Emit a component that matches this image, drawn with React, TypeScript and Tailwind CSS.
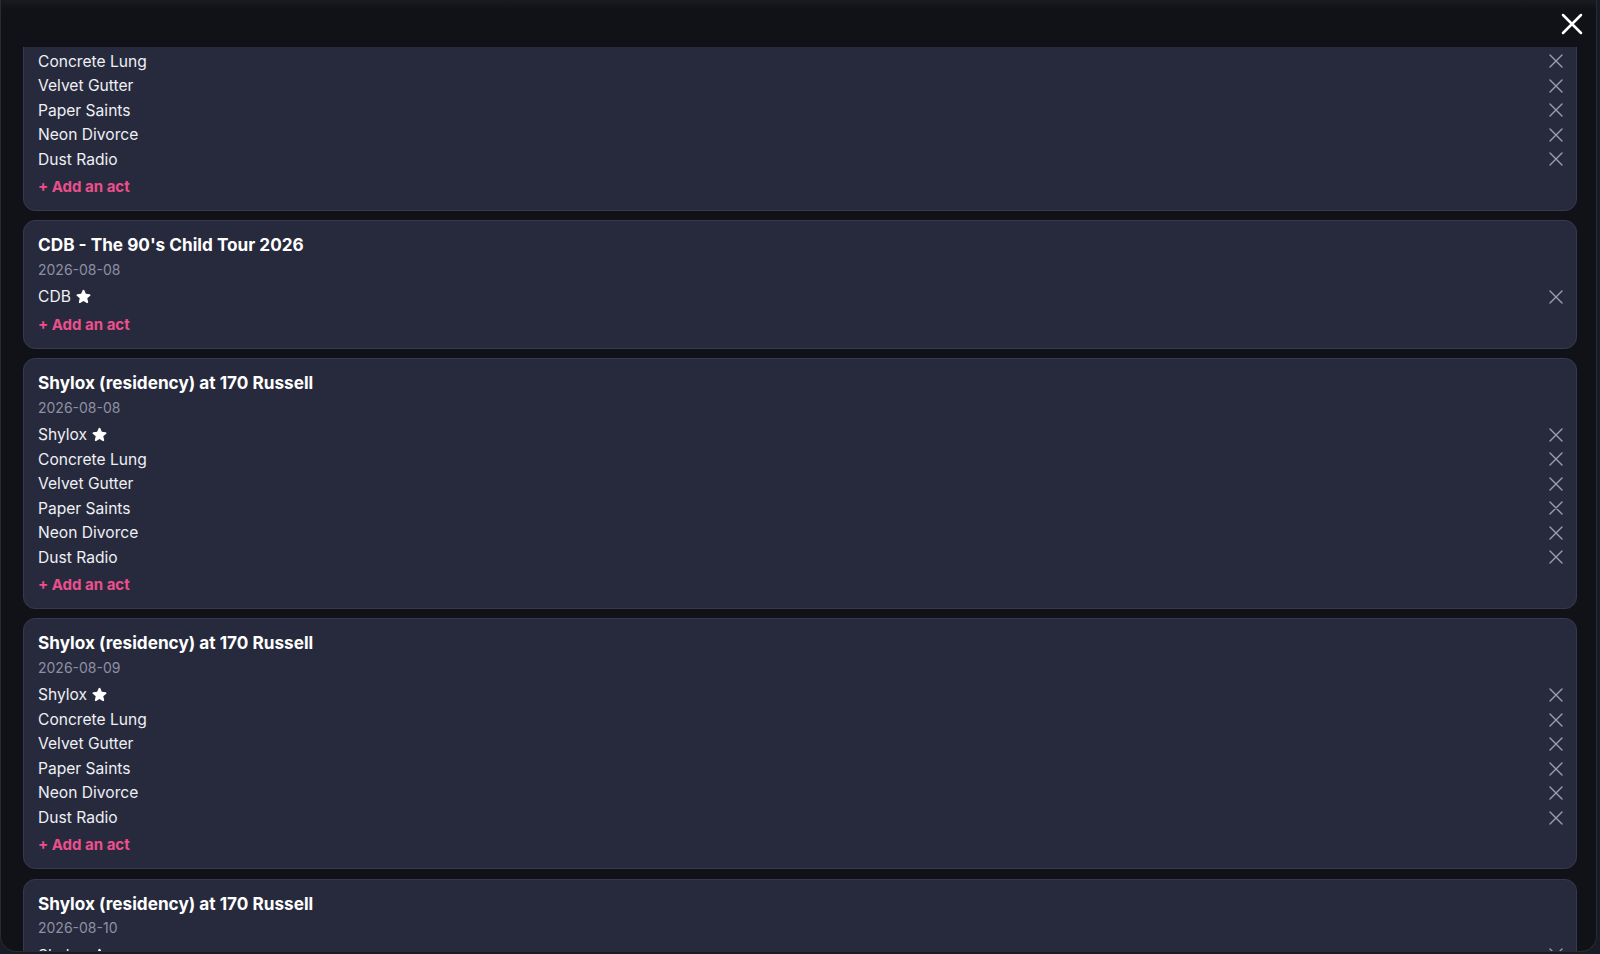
import React from "react";

type Show = { title: string; date: string; acts: string[] };

const SIX = ["Concrete Lung", "Velvet Gutter", "Paper Saints", "Neon Divorce", "Dust Radio"];

const shows: Show[] = [
  { title: "Shylox (residency) at 170 Russell", date: "2026-08-07", acts: ["Shylox", ...SIX] },
  { title: "CDB - The 90's Child Tour 2026", date: "2026-08-08", acts: ["CDB"] },
  { title: "Shylox (residency) at 170 Russell", date: "2026-08-08", acts: ["Shylox", ...SIX] },
  { title: "Shylox (residency) at 170 Russell", date: "2026-08-09", acts: ["Shylox", ...SIX] },
  { title: "Shylox (residency) at 170 Russell", date: "2026-08-10", acts: ["Shylox", ...SIX] },
  { title: "Shylox (residency) at 170 Russell", date: "2026-08-11", acts: ["Shylox", ...SIX] },
];

function XIcon({ className, sw }: { className: string; sw: number }) {
  return (
    <svg viewBox="0 0 24 24" fill="none" stroke="currentColor" strokeWidth={sw} strokeLinecap="round" strokeLinejoin="round" className={className}>
      <path d="M6 18 18 6M6 6l12 12" />
    </svg>
  );
}

function Star() {
  return (
    <svg viewBox="0 0 24 24" fill="currentColor" className="w-[17px] h-[17px] text-white">
      <path d="M10.788 3.21c.448-1.077 1.976-1.077 2.424 0l2.082 5.006 5.404.434c1.164.093 1.636 1.545.749 2.305l-4.117 3.527 1.257 5.273c.271 1.136-.964 2.033-1.96 1.425L12 18.354 7.373 21.18c-.996.608-2.231-.29-1.96-1.425l1.257-5.273-4.117-3.527c-.887-.76-.415-2.212.749-2.305l5.404-.434 2.082-5.005Z" />
    </svg>
  );
}

function Card({ show }: { show: Show }) {
  return (
    <div className="shrink-0 rounded-[12px] border border-[#363a50] bg-[#272a3c] pl-[14px] pr-[8px] pt-[13px] pb-[13px]">
      <div className="h-[21px] leading-[21px] text-[17.2px] font-bold text-white">{show.title}</div>
      <div className="mt-[3.5px] h-[21px] leading-[21px] text-[14px] text-[#8d90a4]">{show.date}</div>
      <div className="mt-[5px] flex flex-col">
        {show.acts.map((a, i) => (
          <div key={i} className="flex h-[24.5px] items-center justify-between">
            <div className="flex items-center gap-[4px] text-[15.6px] text-[#eef0f5]">
              <span>{a}</span>
              {i === 0 && <Star />}
            </div>
            <XIcon className="w-[24px] h-[24px] text-[#9c9fb2]" sw={1.4} />
          </div>
        ))}
      </div>
      <div className="mt-[5.25px] h-[20px] leading-[20px] text-[15px] font-bold text-[#ec4f8c]">+ Add an act</div>
    </div>
  );
}

export default function App() {
  return (
    <div className="h-[954px] w-full bg-[#181c27] pr-[3px] pb-[2px]" style={{ fontFamily: "Inter, 'Noto Sans', sans-serif" }}>
      <div className="flex h-full flex-col overflow-hidden rounded-b-[16px] border border-t-0 border-[#2a2b31] bg-[#111217]">
        <div className="flex h-[47px] shrink-0 items-center justify-end bg-gradient-to-b from-[#1a1b20] to-[#111217] to-[20%] pr-[6px]">
          <XIcon className="w-[36px] h-[36px] text-white" sw={1.7} />
        </div>
        <div
          className="flex-1 overflow-hidden pl-[22px] pr-[19px]"
          ref={(el) => {
            if (el) el.scrollTop = 87;
          }}
        >
          <div className="flex flex-col gap-[9.5px] pb-[20px]">
            {shows.map((s, i) => (
              <Card key={i} show={s} />
            ))}
          </div>
        </div>
      </div>
    </div>
  );
}
